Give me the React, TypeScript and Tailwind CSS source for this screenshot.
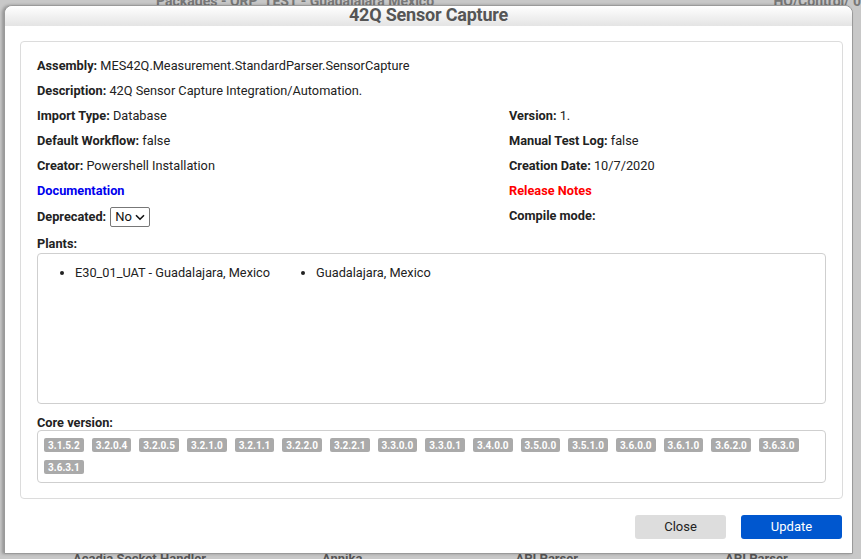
import React from "react";

const versions = [
  "3.1.5.2", "3.2.0.4", "3.2.0.5", "3.2.1.0", "3.2.1.1", "3.2.2.0", "3.2.2.1", "3.3.0.0", "3.3.0.1",
  "3.4.0.0", "3.5.0.0", "3.5.1.0", "3.6.0.0", "3.6.1.0", "3.6.2.0", "3.6.3.0", "3.6.3.1",
];

const Field = ({ label, value }: { label: string; value?: string }) => (
  <div className="h-[25px] leading-[18px]">
    <span className="font-bold">{label}:</span>
    {value !== undefined && <span> {value}</span>}
  </div>
);

const App = () => {
  return (
    <div className="relative h-[559px] w-[861px] overflow-hidden bg-[#c8c8c8] font-['Roboto',sans-serif] text-[12.75px] text-[#222]">
      {/* page behind the dialog */}
      <div className="absolute left-0 top-[-9px] flex w-full text-[14px] font-bold text-[#777]">
        <span className="ml-[156px]">Packages - QRP_TEST - Guadalajara Mexico</span>
        <span className="ml-auto">HO/Control/ 0</span>
      </div>
      <div className="absolute bottom-[-9px] left-0 flex w-full text-[13px] font-bold text-[#555]">
        <span className="ml-[73px]">Acadia Socket Handler</span>
        <span className="ml-[116px]">Annika</span>
        <span className="ml-[153px]">API Parser</span>
        <span className="ml-[147px]">API Parser</span>
      </div>

      <div className="relative ml-[4px] mt-[5px] flex h-[549px] w-[849px] flex-col rounded-t-[8px] border border-[#9a9a9a] bg-white shadow-[-2px_0_3px_rgba(0,0,0,0.25)]">
        <div className="flex h-[20px] items-center justify-center rounded-t-[8px] bg-gradient-to-b from-[#ffffff] to-[#e4e4e4] pb-[4px] text-[18px] font-bold tracking-[-0.2px] text-[#555555]">
          42Q Sensor Capture
        </div>

        <div className="ml-[15px] mr-[9px] mt-[15px] flex h-[458px] flex-col rounded-[4px] border border-[#dcdcdc] px-[16px] pt-[15px]">
          <Field label="Assembly" value="MES42Q.Measurement.StandardParser.SensorCapture" />
          <Field label="Description" value="42Q Sensor Capture Integration/Automation." />
          <div className="grid grid-cols-[472px_1fr]">
            <div>
              <Field label="Import Type" value="Database" />
              <Field label="Default Workflow" value="false" />
              <Field label="Creator" value="Powershell Installation" />
              <div className="h-[25px] font-bold leading-[18px] text-[#0000ee]">Documentation</div>
              <div className="flex h-[25px] items-start">
                <span className="font-bold leading-[20px]">Deprecated:</span>
                <div className="relative ml-[4px]">
                  <select className="h-[20px] w-[40px] appearance-none rounded-[2px] border border-[#777] bg-white pl-[4px] text-[13px] leading-[18px] text-[#111] outline-none">
                    <option>No</option>
                    <option>Yes</option>
                  </select>
                  <svg className="pointer-events-none absolute right-[5px] top-[7px]" width="10" height="7" viewBox="0 0 10 7" fill="none">
                    <path d="M1 1.2 5 5.2 9 1.2" stroke="#111" strokeWidth="1.6" />
                  </svg>
                </div>
              </div>
            </div>
            <div>
              <Field label="Version" value="1." />
              <Field label="Manual Test Log" value="false" />
              <Field label="Creation Date" value="10/7/2020" />
              <div className="h-[25px] font-bold leading-[18px] text-[#ff0000]">Release Notes</div>
              <Field label="Compile mode" />
            </div>
          </div>

          <div className="mt-[5px] font-bold leading-[14px]">Plants:</div>
          <div className="mt-[2px] h-[151px] rounded-[4px] border border-[#cfcfcf] pl-[37px] pt-[10px]">
            <ul className="flex list-disc leading-[18px]">
              <li className="w-[241px]">E30_01_UAT - Guadalajara, Mexico</li>
              <li>Guadalajara, Mexico</li>
            </ul>
          </div>

          <div className="mt-[12px] font-bold leading-[14px]">Core version:</div>
          <div className="flex h-[53px] flex-wrap content-start gap-[8px] rounded-[4px] border border-[#cfcfcf] px-[6px] pt-[7px]">
            {versions.map((v) => (
              <span
                key={v}
                className="flex h-[14px] items-center rounded-[2px] bg-[#aaaaaa] px-[4px] text-[10px] font-bold text-white"
              >
                {v}
              </span>
            ))}
          </div>
        </div>

        <div className="mr-[10px] mt-[16px] flex justify-end gap-[15px] text-[13px]">
          <button className="h-[24px] w-[91px] rounded-[3px] bg-[#dddddd] text-[#222]">Close</button>
          <button className="h-[24px] w-[101px] rounded-[3px] bg-[#0057cf] text-white">Update</button>
        </div>
      </div>
    </div>
  );
};

export default App;
